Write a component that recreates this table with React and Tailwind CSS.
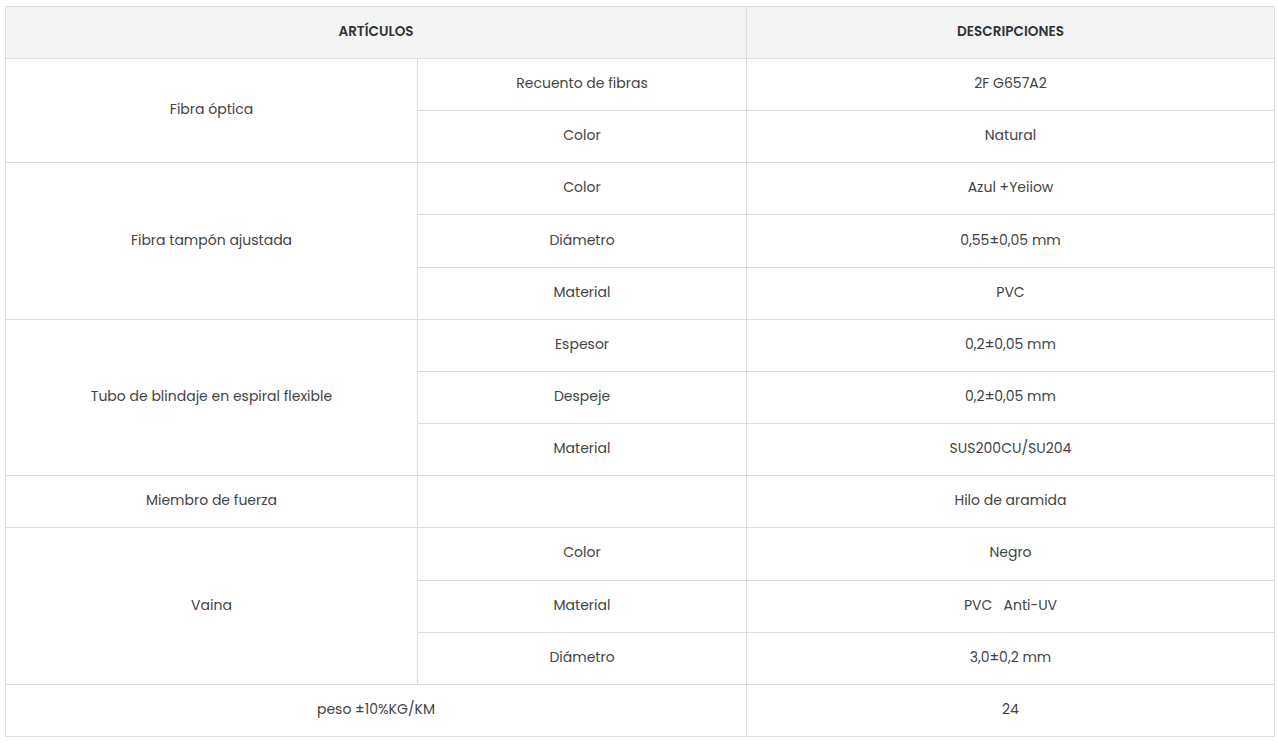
import React from "react";

const groups = [
  {
    item: "Fibra óptica",
    rows: [
      ["Recuento de fibras", "2F G657A2"],
      ["Color", "Natural"],
    ],
  },
  {
    item: "Fibra tampón ajustada",
    rows: [
      ["Color", "Azul +Yeiiow"],
      ["Diámetro", "0,55±0,05 mm"],
      ["Material", "PVC"],
    ],
  },
  {
    item: "Tubo de blindaje en espiral flexible",
    rows: [
      ["Espesor", "0,2±0,05 mm"],
      ["Despeje", "0,2±0,05 mm"],
      ["Material", "SUS200CU/SU204"],
    ],
  },
  {
    item: "Miembro de fuerza",
    rows: [["", "Hilo de aramida"]],
  },
  {
    item: "Vaina",
    rows: [
      ["Color", "Negro"],
      ["Material", "PVC\u00a0\u00a0\u00a0Anti-UV"],
      ["Diámetro", "3,0±0,2 mm"],
    ],
  },
];

const cell = "border border-[#dddddd] text-center align-middle p-0 pb-[2px]";
const head = "border border-[#dddddd] text-center align-middle p-0 pb-[1px] font-semibold text-[13.6px] text-[#333333]";

export default function App() {
  return (
    <div className="bg-white w-[1278px] h-[743px] pt-[6px] pl-[5px] font-['Poppins','Inter','Open_Sans',sans-serif] text-[14px] text-[#444444]">
      <table className="border-collapse w-[1269px] table-fixed">
        <colgroup>
          <col className="w-[412px]" />
          <col className="w-[329px]" />
          <col className="w-[528px]" />
        </colgroup>
        <thead>
          <tr className="h-[52px] bg-[#f4f4f4]">
            <th colSpan={2} className={head}>
              ARTÍCULOS
            </th>
            <th className={head}>DESCRIPCIONES</th>
          </tr>
        </thead>
        <tbody>
          {groups.map((g) =>
            g.rows.map((r, i) => (
              <tr key={g.item + i} className="h-[52.17px]">
                {i === 0 && (
                  <td rowSpan={g.rows.length} className={cell}>
                    {g.item}
                  </td>
                )}
                <td className={cell}>{r[0]}</td>
                <td className={cell}>{r[1]}</td>
              </tr>
            ))
          )}
          <tr className="h-[52.17px]">
            <td colSpan={2} className={cell}>
              peso ±10%KG/KM
            </td>
            <td className={cell}>24</td>
          </tr>
        </tbody>
      </table>
    </div>
  );
}
